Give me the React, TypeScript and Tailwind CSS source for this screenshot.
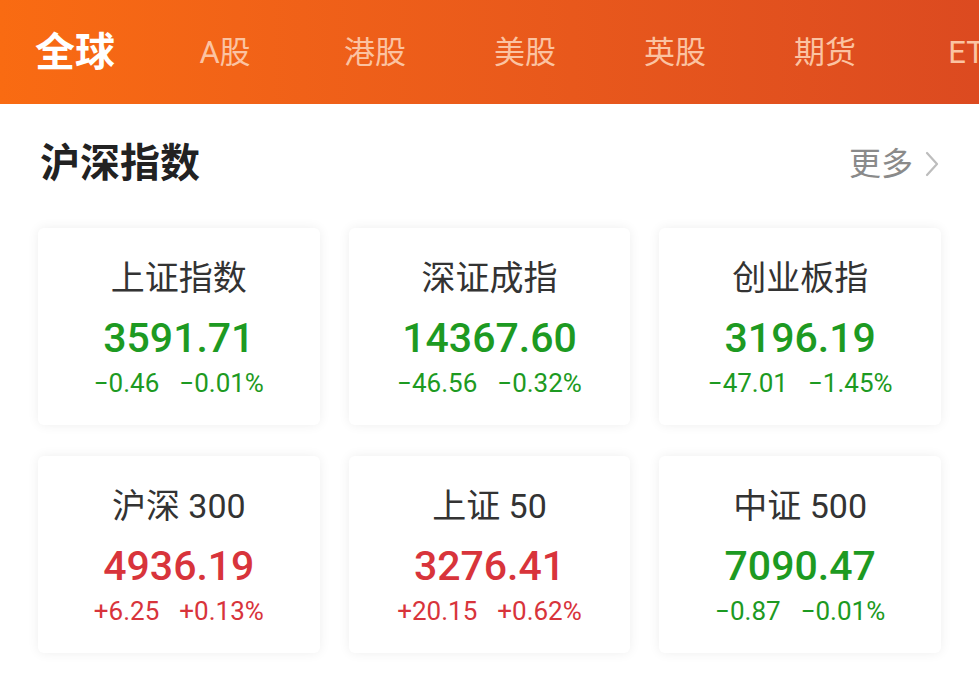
import React from 'react';

type Index = {
  name: string;
  value: string;
  change: string;
  percent: string;
  up: boolean;
};

const tabs = ['全球', 'A股', '港股', '美股', '英股', '期货', 'ETF'];

const indices: Index[] = [
  { name: '上证指数', value: '3591.71', change: '−0.46', percent: '−0.01%', up: false },
  { name: '深证成指', value: '14367.60', change: '−46.56', percent: '−0.32%', up: false },
  { name: '创业板指', value: '3196.19', change: '−47.01', percent: '−1.45%', up: false },
  { name: '沪深 300', value: '4936.19', change: '+6.25', percent: '+0.13%', up: true },
  { name: '上证 50', value: '3276.41', change: '+20.15', percent: '+0.62%', up: true },
  { name: '中证 500', value: '7090.47', change: '−0.87', percent: '−0.01%', up: false },
];

const IndexCard: React.FC<{ item: Index }> = ({ item }) => {
  const color = item.up ? 'text-[#d8343b]' : 'text-[#1d9a22]';
  return (
    <div className="h-[197px] bg-white rounded-md shadow-[0_0_12px_rgba(0,0,0,0.07)] flex flex-col items-center pt-[30px]">
      <div className="text-[34px] leading-[40px] text-[#333]">{item.name}</div>
      <div className={`mt-[15px] text-[41px] leading-[50px] font-medium ${color}`}>{item.value}</div>
      <div className={`mt-[5px] flex gap-[20px] text-[26px] leading-[30px] ${color}`}>
        <span>{item.change}</span>
        <span>{item.percent}</span>
      </div>
    </div>
  );
};

export default function App() {
  return (
    <div
      className="w-[979px] h-[680px] bg-white overflow-hidden"
      style={{ fontFamily: 'Roboto, "Noto Sans CJK SC", sans-serif' }}
    >
      <div className="h-[104px] bg-gradient-to-r from-[#f96b12] to-[#dc4a20] flex items-center overflow-hidden pt-[2px]">
        {tabs.map((t, i) => (
          <div
            key={t}
            className={`w-[150px] shrink-0 text-center ${
              i === 0
                ? 'text-[40px] font-semibold text-white'
                : 'text-[31px] text-[#fbc3a2]'
            }`}
          >
            {t}
          </div>
        ))}
      </div>

      <div className="h-[124px] px-[38px] flex items-center justify-between pb-[4px]">
        <div className="text-[40px] font-bold text-[#222] pl-[2px]">沪深指数</div>
        <div className="flex items-center gap-[12px] text-[32px] text-[#8a8a8a] pr-[2px]">
          <span>更多</span>
          <svg width="14" height="26" viewBox="0 0 14 26" fill="none">
            <path d="M2 2l10 11L2 24" stroke="#bdbdbd" strokeWidth="2.2" strokeLinecap="round" strokeLinejoin="round" />
          </svg>
        </div>
      </div>

      <div className="px-[38px] grid grid-cols-3 gap-x-[29px] gap-y-[31px]">
        {indices.map((item) => (
          <IndexCard key={item.name} item={item} />
        ))}
      </div>
    </div>
  );
}
